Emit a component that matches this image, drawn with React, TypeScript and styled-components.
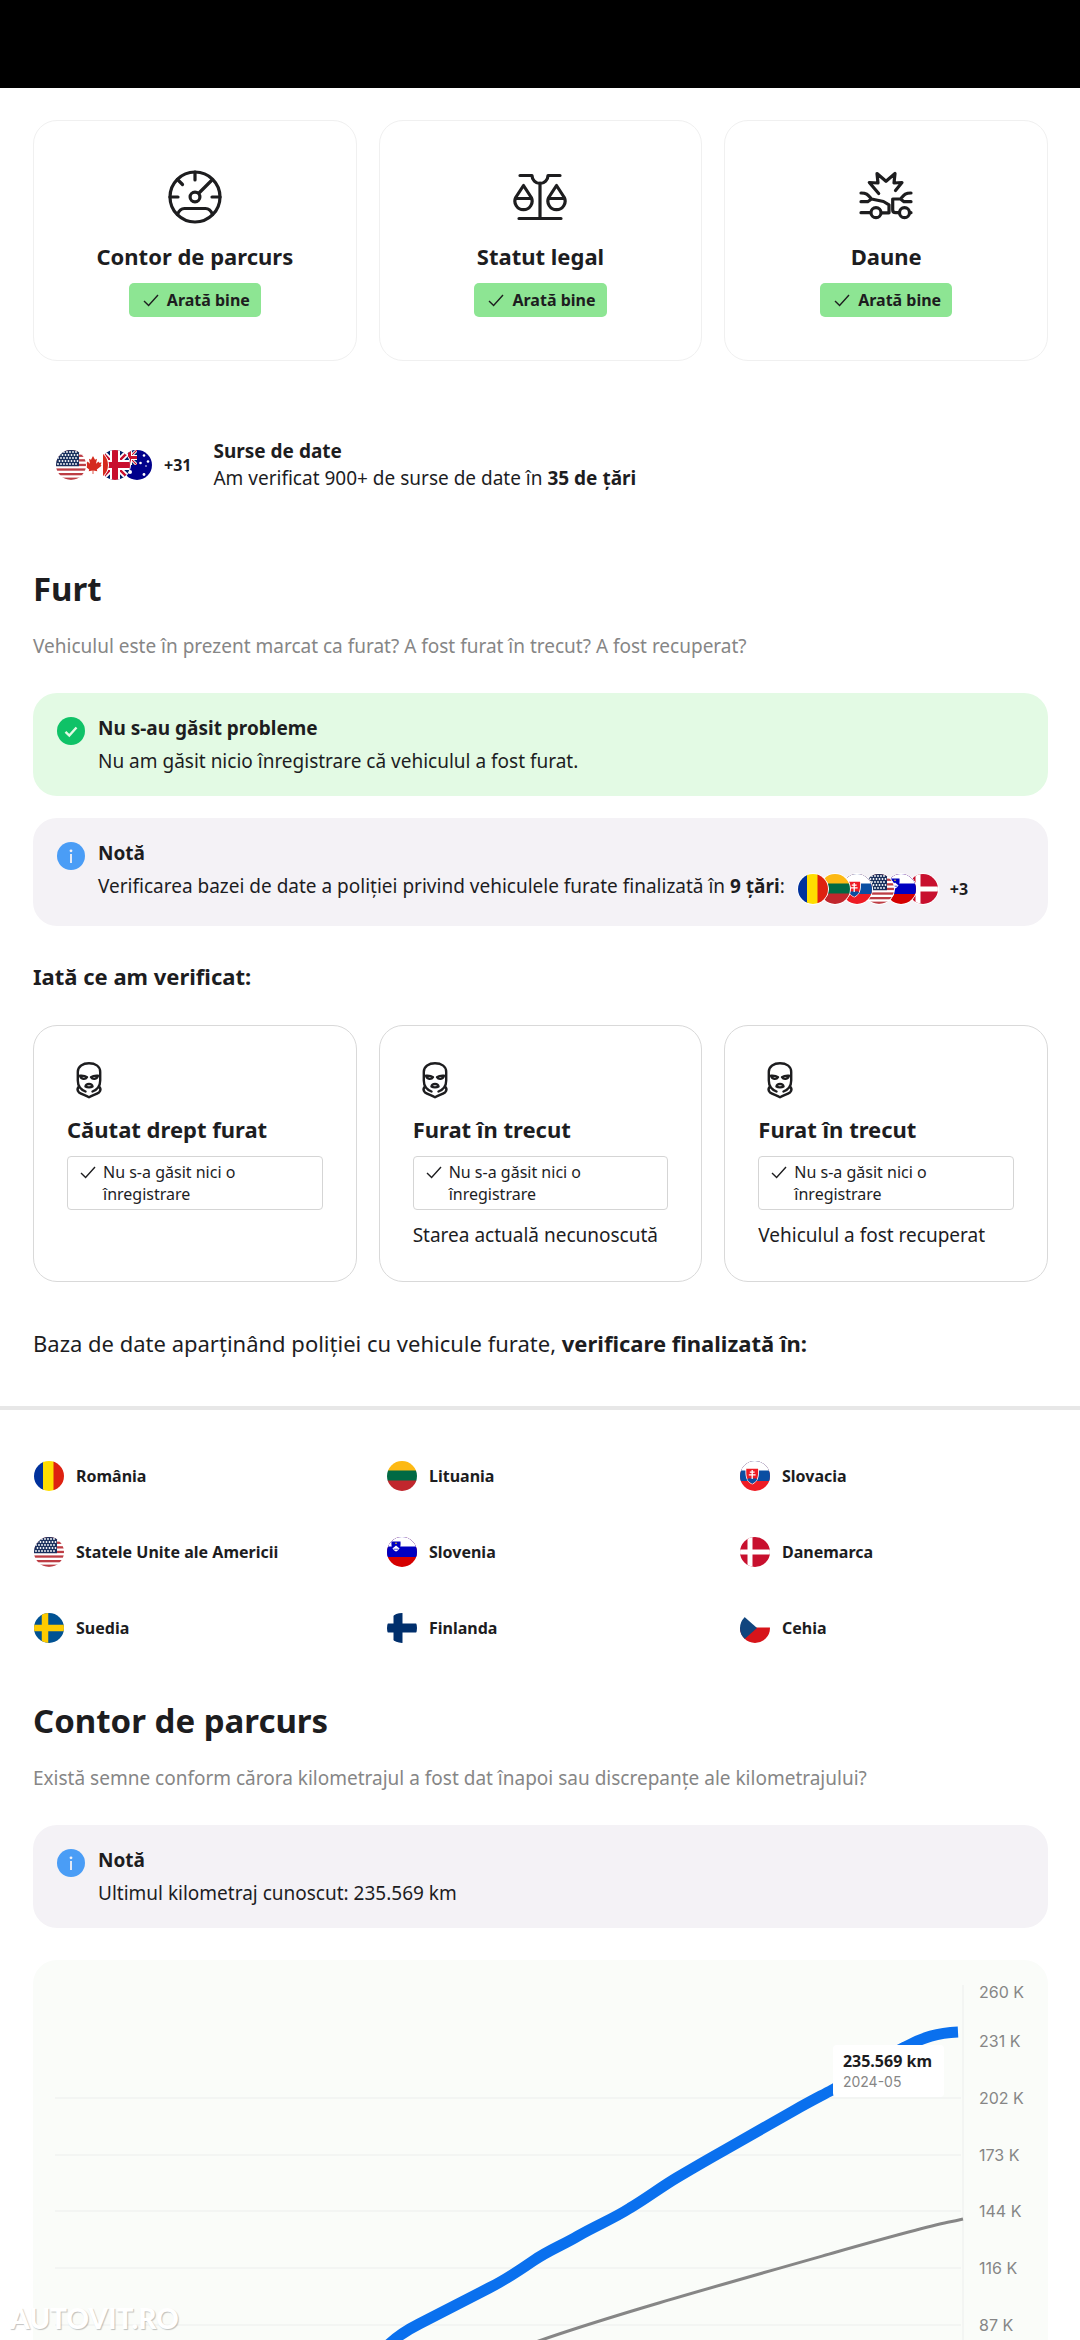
import React from "react";
import styled, { createGlobalStyle } from "styled-components";

const ink = "#1d1d1f";
const muted = "#868686";

const GlobalStyle = createGlobalStyle`
  *, *::before, *::after { box-sizing: border-box; }
  body {
    margin: 0;
    background: #ffffff;
    color: ${ink};
    font-family: "Noto Sans", "Open Sans", sans-serif;
    font-size: 19px;
    line-height: 28px;
  }
  h2, h3, p, ul { margin: 0; padding: 0; }
  ul { list-style: none; }
`;

const Page = styled.main`
  position: relative;
  display: flex;
  flex-direction: column;
`;

const StatusBar = styled.div`
  height: 88px;
  background: #000000;
`;

const Section = styled.section<{ $top: number }>`
  display: flex;
  flex-direction: column;
  padding: ${(p) => p.$top}px 32px 0 33px;
`;

const CardGrid = styled.div`
  display: grid;
  grid-template-columns: repeat(3, minmax(0, 1fr));
  gap: 22px;
`;

const SummaryCard = styled.article`
  display: flex;
  flex-direction: column;
  align-items: center;
  padding: 48px 24px 43px;
  border: 1px solid #f0f0f0;
  border-radius: 24px;
`;

const CardTitle = styled.h3<{ $top: number }>`
  margin: ${(p) => p.$top}px 0 12px;
  font-size: 22px;
  line-height: 30px;
  font-weight: 700;
`;

const Badge = styled.span`
  display: flex;
  align-items: center;
  gap: 8px;
  height: 34px;
  padding: 0 11px 0 14px;
  border-radius: 5px;
  background: #8de593;
  font-size: 16px;
  line-height: 22px;
  font-weight: 700;
`;

const Sources = styled.div`
  display: flex;
  align-items: center;
  gap: 22px;
  padding: 77px 22px 75px;
  line-height: 27px;
`;

const SourcesTitle = styled.h3`
  font-size: 19px;
  font-weight: 700;
`;

const FlagRow = styled.span`
  display: flex;
  align-items: center;
`;

const FlagArt = styled.svg`
  flex: none;
  width: 32px;
  height: 32px;
  border: 1px solid #ffffff;
  border-radius: 50%;
  background: #ffffff;
`;

const StackItem = styled.span<{ $order: number }>`
  display: flex;
  position: relative;
  z-index: ${(p) => p.$order};
  & + & { margin-left: -10px; }
`;

const More = styled.span`
  margin-left: 11px;
  font-size: 16px;
  line-height: 22px;
  font-weight: 700;
`;

const Heading = styled.h2`
  font-size: 33px;
  line-height: 44px;
  font-weight: 700;
`;

const Lead = styled.p`
  margin: 21px 0 33px;
  color: ${muted};
`;

const Notice = styled.div<{ $tone: "success" | "info" }>`
  display: flex;
  align-items: flex-start;
  gap: 13px;
  padding: 19px 24px 18px;
  border-radius: 24px;
  background: ${(p) => (p.$tone === "success" ? "#e3fae4" : "#f4f2f6")};
  line-height: 33px;
  & + & { margin-top: 22px; }
`;

const NoticeIcon = styled.svg`
  flex: none;
  width: 28px;
  height: 28px;
  margin-top: 5px;
`;

const NoticeBody = styled.div`
  flex: 1;
  min-width: 0;
`;

const NoticeTitle = styled.h3`
  font-size: 19px;
  font-weight: 700;
`;

const FlagLine = styled.div`
  display: flex;
  align-items: flex-start;
  gap: 12px;
  ${FlagRow} { margin: 3px 0; }
`;

const Subheading = styled.h3`
  margin: 36px 0 35px;
  font-size: 22px;
  line-height: 28px;
  font-weight: 700;
`;

const CheckCard = styled.article`
  padding: 32px 33px;
  border: 1px solid #d9d9d9;
  border-radius: 24px;
`;

const MaskHolder = styled.span`
  display: flex;
`;

const Tag = styled.div`
  display: flex;
  align-items: flex-start;
  gap: 7px;
  padding: 4px 12px;
  border: 1px solid #d5d5d5;
  border-radius: 4px;
  font-size: 16px;
  line-height: 22px;
`;

const TagCheck = styled.span`
  display: flex;
  align-items: center;
  height: 22px;
`;

const CardNote = styled.p`
  margin-top: 11px;
`;

const DatabaseLine = styled.p`
  margin: 47px 0 49px;
  font-size: 22px;
`;

const Divider = styled.hr`
  width: 100%;
  height: 4px;
  margin: 0;
  border: 0;
  background: #e7e7e7;
`;

const CountryGrid = styled.ul`
  display: grid;
  grid-template-columns: repeat(3, minmax(0, 1fr));
  gap: 44px;
`;

const Country = styled.li`
  display: flex;
  align-items: center;
  gap: 11px;
  font-size: 16px;
  line-height: 22px;
  font-weight: 700;
`;

const ChartPanel = styled.figure`
  position: relative;
  margin: 32px 0 0;
  border-radius: 24px 24px 0 0;
  background: #fafcf9;
  overflow: hidden;
`;

const ChartArt = styled.svg`
  display: block;
  width: 100%;
  height: auto;
  text {
    font-family: Inter, sans-serif;
    font-size: 16px;
    fill: ${muted};
  }
`;

const ChartTip = styled.div`
  position: absolute;
  top: 85px;
  right: 104px;
  display: flex;
  flex-direction: column;
  padding: 5px 12px 5px 10px;
  border-radius: 4px;
  background: #ffffff;
`;

const TipValue = styled.strong`
  font-size: 16px;
  line-height: 22px;
  font-weight: 700;
`;

const TipDate = styled.span`
  font-family: Inter, sans-serif;
  font-size: 14px;
  line-height: 20px;
  color: ${muted};
`;

const Watermark = styled.span`
  position: absolute;
  left: 10px;
  bottom: 2px;
  font-family: Lato, sans-serif;
  font-size: 28px;
  line-height: 40px;
  font-weight: 900;
  color: #ffffff;
  text-shadow: 1px 1px 1px rgba(0, 0, 0, 0.24);
`;

const Check = () => (
  <svg width="16" height="16" viewBox="1 1 16 16" fill="none" stroke="currentColor" strokeWidth="1.4">
    <path d="M2 10l4.6 4.400L16 4" />
  </svg>
);

const iconProps = {
  viewBox: "-28 -28 56 56",
  fill: "none",
  stroke: ink,
  strokeWidth: 3.2,
  strokeLinecap: "round" as const,
  strokeLinejoin: "round" as const,
};

const GaugeIcon = () => (
  <svg width="56" height="56" {...iconProps}>
    <circle r="25" />
    <circle r="4.9" />
    <path d="M0-25v8M-25 0h8M25 0h-8M-17.5-17.5l5 5M17-17L4-4M-17.5 17.5c1.500-4 4-6 7-6h21c3 0 5.500 2 7 6" />
  </svg>
);

const ScalesIcon = () => (
  <svg width="56" height="56" {...iconProps}>
    <path d="M-20-21.500h12a8 8 0 0 0 16 0h12M0-14v35.500M-21 21.500h42" />
    <path d="M-16.500-11.500l-7.800 12a8.600 8.600 0 1 0 15.600 0zM-24.500 1.500h16" />
    <path d="M16.500-11.500l-7.800 12a8.600 8.600 0 1 0 15.600 0zM8.500 1.500h16" />
  </svg>
);

const CrashIcon = () => (
  <svg width="56" height="56" {...iconProps}>
    <path d="M-7.300-3.500l-9.400-11 8.700.5-1-9.500L0-15.700l9-7.800-1 9.500 8-.5-6.500 8" />
    <path d="M-25-4c6 0 7 2 10.500 6L-2.500 4.500 3 7.800v8h-7M-25 4.700h6.700l3.800-2.700M-25 15.700h9" />
    <path d="M25-4c-6 0-7 2-10.500 6H6.700v11c0 2 1 2.700 3 2.700h3M25 4.700h-7L14.500 2M24 15.700h1" />
    <circle cx="-10" cy="15.700" r="5" />
    <circle cx="18.500" cy="15.700" r="5" />
  </svg>
);

const MaskIcon = () => (
  <svg
    width="44"
    height="44"
    viewBox="-22 -22 44 44"
    fill="none"
    stroke={ink}
    strokeWidth="2.4"
    strokeLinecap="round"
    strokeLinejoin="round"
  >
    <path d="M-3.500 11.500c-5-2-7.700-6-7.700-11V-8C-11.200-14-6-16.700 0-16.700S11.200-14 11.200-8V.500c0 5-2.700 9-7.700 11" />
    <path d="M-10.500 7c-1.500 2-1 4 .5 5.500C-7 14.500-4 15 0 17.200 4 15 7 14.500 10 12.500c1.500-1.500 2-3.500.5-5.500" />
    <path d="M-9-4.300c2.500-.2 5 0 7 1.500-1.500 2.400-6 2.400-7-1.500zM9-4.300c-2.500-.2-5 0-7 1.500 1.500 2.400 6 2.400 7-1.500z" />
    <path d="M-3.500 6.500C-3.200 4.700-2 4 0 4s3.200.7 3.500 2.500c-1.700 1.200-5.300 1.200-7 0z" />
  </svg>
);

const starRows = [2, 5, 8, 11, 14];
const starCols = [2, 5, 8, 11, 14, 17, 20];

const UnionJack = () => (
  <>
    <rect width="30" height="30" fill="#012169" />
    <path d="M0 0l30 30M30 0L0 30" stroke="#fff" strokeWidth="6" />
    <path d="M0 0l30 30M30 0L0 30" stroke="#c8102e" strokeWidth="2.4" />
    <path d="M15 0v30M0 15h30" stroke="#fff" strokeWidth="10" />
    <path d="M15 0v30M0 15h30" stroke="#c8102e" strokeWidth="6" />
  </>
);

const flags: Record<string, React.ReactNode> = {
  us: (
    <>
      <rect width="30" height="30" fill="#fff" />
      {[0, 1, 2, 3, 4, 5, 6].map((i) => (
        <rect key={i} y={i * 4.6} width="30" height="2.3" fill="#bd3d44" />
      ))}
      <rect width="23" height="16.2" fill="#192f5d" />
      {starRows.map((y, r) =>
        starCols.map((x) => <circle key={`${x}-${y}`} cx={x + (r % 2) * 1.5} cy={y} r="0.9" fill="#fff" />)
      )}
    </>
  ),
  ca: (
    <>
      <rect width="30" height="30" fill="#fff" />
      <path d="M0 0h5v30H0zM25 0h5v30h-5z" fill="#d52b1e" />
      <path
        d="M15 6l2 3.700 2-1-1 5 2.500-2.300.6 1.400 2.500-.4-1 2.600 1 .8-4.800 3.800.5 1.600-3.900-.6V24h-.8v-3.400l-3.900.6.5-1.600-4.800-3.800 1-.8-1-2.600 2.500.4.600-1.400 2.500 2.300-1-5 2 1z"
        fill="#d52b1e"
      />
    </>
  ),
  gb: <UnionJack />,
  au: (
    <>
      <rect width="30" height="30" fill="#00008b" />
      <svg width="15" height="15" viewBox="0 0 30 30">
        <UnionJack />
      </svg>
      <g fill="#fff">
        <circle cx="8" cy="22" r="2" />
        <circle cx="22" cy="5.500" r="1.300" />
        <circle cx="18.500" cy="13" r="1.300" />
        <circle cx="26" cy="11.500" r="1.300" />
        <circle cx="22" cy="24.500" r="1.400" />
        <circle cx="24" cy="16" r="0.800" />
      </g>
    </>
  ),
  ro: (
    <>
      <rect width="10" height="30" fill="#00319c" />
      <rect x="9" width="11" height="30" fill="#ffde00" />
      <rect x="19.500" width="11" height="30" fill="#de2110" />
    </>
  ),
  lt: (
    <>
      <rect width="30" height="10" fill="#fdb913" />
      <rect y="9.500" width="30" height="10.500" fill="#006a44" />
      <rect y="19.500" width="30" height="10.500" fill="#c1272d" />
    </>
  ),
  sk: (
    <>
      <rect width="30" height="30" fill="#ee1c25" />
      <rect width="30" height="20" fill="#0b4ea2" />
      <rect width="30" height="9.500" fill="#fff" />
      <path d="M5.500 7h13.400c.4 9-.4 13-6.700 16.600C5.900 20 5.100 16 5.500 7z" fill="#fff" />
      <path d="M6.300 7.700h11.800c.3 8-.4 11.700-5.900 15-5.500-3.300-6.200-7-5.900-15z" fill="#ee1c25" />
      <path d="M7.400 18.500c1.200-1.600 2.300-1.600 3.200-.8.900-1.600 2.300-1.600 3.200 0 .9-.8 2-.8 3.200.8-1 1.800-2.700 3.200-4.800 4.200-2.100-1-3.800-2.400-4.800-4.200z" fill="#0b4ea2" />
      <path d="M12.200 9v9M9.800 11.200h4.800M8.800 13.900h6.800" stroke="#fff" strokeWidth="1.300" />
    </>
  ),
  si: (
    <>
      <rect width="30" height="30" fill="#d50000" />
      <rect width="30" height="20" fill="#0000c1" />
      <rect width="30" height="9.500" fill="#fff" />
      <path d="M4.500 4.500h9c.3 5.500-.5 8.500-4.500 10.500-4-2-4.800-5-4.500-10.500z" fill="#0000c1" />
      <path d="M5.500 11.500L9 8.600l3.500 2.900c-.8 1.500-2 2.300-3.500 3-1.500-.7-2.700-1.500-3.500-3z" fill="#fff" />
      <path d="M6.500 12.200h5" stroke="#0000c1" strokeWidth="0.700" />
      <circle cx="9" cy="6.300" r="0.800" fill="#ffdd00" />
    </>
  ),
  dk: (
    <>
      <rect width="30" height="30" fill="#c8102e" />
      <path d="M10 0v30M0 15h30" stroke="#fff" strokeWidth="5" />
    </>
  ),
  se: (
    <>
      <rect width="30" height="30" fill="#005293" />
      <path d="M11 0v30M0 15h30" stroke="#fecb00" strokeWidth="6.500" />
    </>
  ),
  fi: (
    <>
      <rect width="30" height="30" fill="#fff" />
      <path d="M11 0v30M0 15h30" stroke="#002f6c" strokeWidth="9" />
    </>
  ),
  cz: (
    <>
      <rect width="30" height="30" fill="#fff" />
      <rect y="14.500" width="30" height="15.500" fill="#d7141a" />
      <path d="M0 0v30l17-15z" fill="#11457e" />
    </>
  ),
};

const Flag = ({ code }: { code: string }) => (
  <FlagArt viewBox="0 0 30 30" aria-hidden="true">
    {flags[code]}
  </FlagArt>
);

const FlagStack = ({ codes, more }: { codes: string[]; more: string }) => (
  <FlagRow>
    {codes.map((code, i) => (
      <StackItem key={code} $order={codes.length - i}>
        <Flag code={code} />
      </StackItem>
    ))}
    <More>{more}</More>
  </FlagRow>
);

const SuccessMark = () => (
  <NoticeIcon viewBox="0 0 28 28" fill="none">
    <circle cx="14" cy="14" r="14" fill="#0fc267" />
    <path d="M8.500 14.800l3.800 3.700 7.200-8" stroke="#e3fae4" strokeWidth="2.400" />
  </NoticeIcon>
);

const InfoMark = () => (
  <NoticeIcon viewBox="0 0 28 28">
    <circle cx="14" cy="14" r="14" fill="#4a9df6" />
    <circle cx="14" cy="8.800" r="1.400" fill="#f4f2f6" />
    <rect x="13.100" y="12" width="1.800" height="9" fill="#f4f2f6" />
  </NoticeIcon>
);

const summary = [
  { title: "Contor de parcurs", icon: <GaugeIcon /> },
  { title: "Statut legal", icon: <ScalesIcon /> },
  { title: "Daune", icon: <CrashIcon /> },
];

const checks = [
  { title: "Căutat drept furat", note: "" },
  { title: "Furat în trecut", note: "Starea actuală necunoscută" },
  { title: "Furat în trecut", note: "Vehiculul a fost recuperat" },
];

const countries = [
  ["ro", "România"],
  ["lt", "Lituania"],
  ["sk", "Slovacia"],
  ["us", "Statele Unite ale Americii"],
  ["si", "Slovenia"],
  ["dk", "Danemarca"],
  ["se", "Suedia"],
  ["fi", "Finlanda"],
  ["cz", "Cehia"],
];

const axis: [string, number][] = [
  ["260 K", 32],
  ["231 K", 81],
  ["202 K", 138],
  ["173 K", 195],
  ["144 K", 251],
  ["116 K", 308],
  ["87 K", 365],
];

const MileageChart = () => (
  <ChartPanel>
    <ChartArt viewBox="0 0 1015 380" role="img" aria-label="Contor de parcurs">
      {axis.slice(2).map(([label, y]) => (
        <path key={label} d={`M22 ${y}H928`} stroke="#f3f5f3" strokeWidth="2" />
      ))}
      <path d="M930 25V380" stroke="#f3f5f3" strokeWidth="2" />
      <path d="M500 383C570 358 680 327 800 293S900 266 930 259" fill="none" stroke="#868686" strokeWidth="3" />
      <path
        d="M352 388C362 378 372 371 386 364L456 328C474 319 487 310 500 301C516 290 530 285 545 276C564 265 580 259 597 248C614 238 628 227 645 217C662 207 674 200 690 191L762 150C778 141 786 137 799 130C830 114 850 98 872 87C890 77 905 73 925 72"
        fill="none"
        stroke="#0a70ee"
        strokeWidth="11"
      />
      {axis.map(([label, y]) => (
        <text key={label} x="946" y={y + 6}>
          {label}
        </text>
      ))}
    </ChartArt>
    <ChartTip>
      <TipValue>235.569 km</TipValue>
      <TipDate>2024-05</TipDate>
    </ChartTip>
  </ChartPanel>
);

export default function App() {
  return (
    <>
      <GlobalStyle />
      <Page>
        <StatusBar />
        <Section $top={32}>
          <CardGrid>
            {summary.map((item) => (
              <SummaryCard key={item.title}>
                {item.icon}
                <CardTitle $top={16}>{item.title}</CardTitle>
                <Badge>
                  <Check />
                  Arată bine
                </Badge>
              </SummaryCard>
            ))}
          </CardGrid>
          <Sources>
            <FlagStack codes={["us", "ca", "gb", "au"]} more="+31" />
            <div>
              <SourcesTitle>Surse de date</SourcesTitle>
              <p>
                Am verificat 900+ de surse de date în <strong>35 de țări</strong>
              </p>
            </div>
          </Sources>
          <Heading>Furt</Heading>
          <Lead>Vehiculul este în prezent marcat ca furat? A fost furat în trecut? A fost recuperat?</Lead>
          <Notice $tone="success">
            <SuccessMark />
            <NoticeBody>
              <NoticeTitle>Nu s-au găsit probleme</NoticeTitle>
              <p>Nu am găsit nicio înregistrare că vehiculul a fost furat.</p>
            </NoticeBody>
          </Notice>
          <Notice $tone="info">
            <InfoMark />
            <NoticeBody>
              <NoticeTitle>Notă</NoticeTitle>
              <FlagLine>
                <p>
                  Verificarea bazei de date a poliției privind vehiculele furate finalizată în{" "}
                  <strong>9 țări</strong>:
                </p>
                <FlagStack codes={["ro", "lt", "sk", "us", "si", "dk"]} more="+3" />
              </FlagLine>
            </NoticeBody>
          </Notice>
          <Subheading>Iată ce am verificat:</Subheading>
          <CardGrid>
            {checks.map((item, i) => (
              <CheckCard key={i}>
                <MaskHolder>
                  <MaskIcon />
                </MaskHolder>
                <CardTitle $top={12}>{item.title}</CardTitle>
                <Tag>
                  <TagCheck>
                    <Check />
                  </TagCheck>
                  <span>Nu s-a găsit nici o înregistrare</span>
                </Tag>
                {item.note && <CardNote>{item.note}</CardNote>}
              </CheckCard>
            ))}
          </CardGrid>
          <DatabaseLine>
            Baza de date aparținând poliției cu vehicule furate, <strong>verificare finalizată în:</strong>
          </DatabaseLine>
        </Section>
        <Divider />
        <Section $top={50}>
          <CountryGrid>
            {countries.map(([code, name]) => (
              <Country key={code}>
                <Flag code={code} />
                {name}
              </Country>
            ))}
          </CountryGrid>
        </Section>
        <Section $top={55}>
          <Heading>Contor de parcurs</Heading>
          <Lead>Există semne conform cărora kilometrajul a fost dat înapoi sau discrepanțe ale kilometrajului?</Lead>
          <Notice $tone="info">
            <InfoMark />
            <NoticeBody>
              <NoticeTitle>Notă</NoticeTitle>
              <p>Ultimul kilometraj cunoscut: 235.569 km</p>
            </NoticeBody>
          </Notice>
          <MileageChart />
        </Section>
        <Watermark>AUTOVIT.RO</Watermark>
      </Page>
    </>
  );
}
